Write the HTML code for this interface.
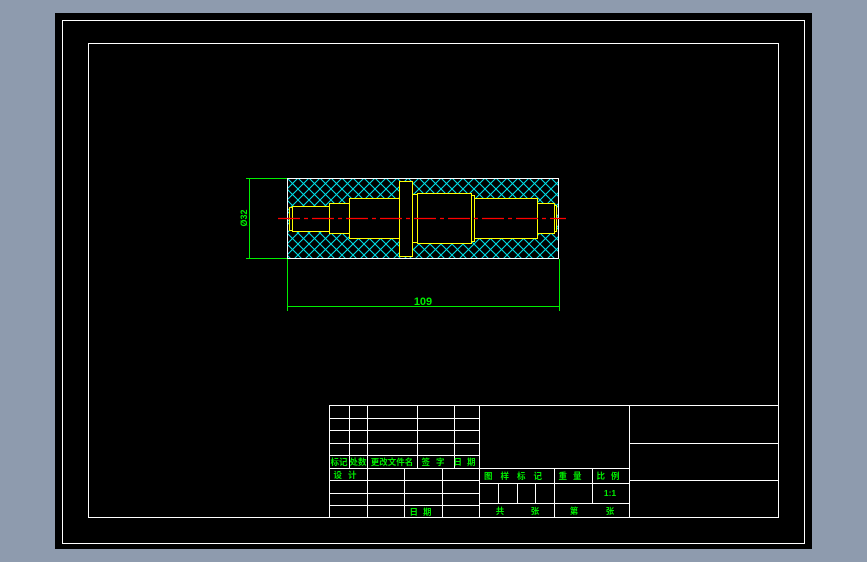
<!DOCTYPE html>
<html><head><style>html,body{margin:0;padding:0;background:#8e9bae;width:867px;height:562px;overflow:hidden}</style></head>
<body>
<svg width="867" height="562" viewBox="0 0 867 562" xmlns="http://www.w3.org/2000/svg" style="display:block">
<defs>
<pattern id="h" x="287" y="178" width="11" height="11" patternUnits="userSpaceOnUse">
<path d="M0 0L11 11M11 0L0 11" stroke="#00e5ee" stroke-width="1"/>
</pattern>
</defs>
<rect x="55" y="13" width="757" height="536" fill="#000"/>
<rect x="62.5" y="20.5" width="742" height="523" fill="none" stroke="#fff"/>
<rect x="88.5" y="43.5" width="690" height="474" fill="none" stroke="#fff"/>
<rect x="287.5" y="178.5" width="271" height="80" fill="url(#h)" stroke="#fff"/>
<g fill="#000" stroke="#ffff00" stroke-width="1">
<rect x="289.5" y="207.5" width="3" height="23"/>
<rect x="292.5" y="206.5" width="37" height="25"/>
<rect x="329.5" y="203.5" width="20" height="30"/>
<rect x="349.5" y="198.5" width="51" height="40"/>
<rect x="411.5" y="194.5" width="6" height="48"/>
<rect x="417.5" y="193.5" width="54" height="50"/>
<rect x="471.5" y="195.5" width="3" height="46"/>
<rect x="474.5" y="198.5" width="63" height="40"/>
<rect x="537.5" y="203.5" width="17" height="30"/>
<rect x="554.5" y="205.5" width="2" height="26"/>
<rect x="399.5" y="181.5" width="13" height="75"/>
</g>
<line x1="278" y1="218.5" x2="566" y2="218.5" stroke="#ff0000" stroke-width="1.2" stroke-dasharray="22,4,4,4"/>
<g stroke="#00ee00" stroke-width="1">
<line x1="246" y1="178.5" x2="287" y2="178.5"/>
<line x1="246" y1="258.5" x2="287" y2="258.5"/>
<line x1="249.5" y1="178" x2="249.5" y2="258"/>
<line x1="287.5" y1="259" x2="287.5" y2="311"/>
<line x1="559.5" y1="259" x2="559.5" y2="311"/>
<line x1="287" y1="306.5" x2="559" y2="306.5"/>
</g>
<g fill="#00ee00" font-family="Liberation Sans, sans-serif">
<text x="423" y="305" font-size="11" text-anchor="middle" font-weight="bold">109</text>
<text transform="translate(247,218) rotate(-90)" font-size="9" text-anchor="middle" font-weight="bold">Ø32</text>
</g>
<g stroke="#fff" stroke-width="1" fill="none">
<rect x="329.5" y="405.5" width="449" height="112"/>
<line x1="329" y1="418.5" x2="479" y2="418.5"/>
<line x1="329" y1="430.5" x2="479" y2="430.5"/>
<line x1="329" y1="443.5" x2="479" y2="443.5"/>
<line x1="329" y1="455.5" x2="479" y2="455.5"/>
<line x1="329" y1="468.5" x2="629" y2="468.5"/>
<line x1="329" y1="480.5" x2="479" y2="480.5"/>
<line x1="329" y1="493.5" x2="479" y2="493.5"/>
<line x1="329" y1="505.5" x2="479" y2="505.5"/>
<line x1="349.5" y1="405" x2="349.5" y2="468"/>
<line x1="367.5" y1="405" x2="367.5" y2="518"/>
<line x1="417.5" y1="405" x2="417.5" y2="468"/>
<line x1="454.5" y1="405" x2="454.5" y2="468"/>
<line x1="404.5" y1="468" x2="404.5" y2="518"/>
<line x1="442.5" y1="468" x2="442.5" y2="518"/>
<line x1="479.5" y1="405" x2="479.5" y2="518"/>
<line x1="629.5" y1="405" x2="629.5" y2="518"/>
<line x1="629" y1="443.5" x2="779" y2="443.5"/>
<line x1="629" y1="480.5" x2="779" y2="480.5"/>
<line x1="479" y1="483.5" x2="629" y2="483.5"/>
<line x1="479" y1="503.5" x2="629" y2="503.5"/>
<line x1="554.5" y1="468" x2="554.5" y2="518"/>
<line x1="592.5" y1="468" x2="592.5" y2="503"/>
<line x1="498.5" y1="483" x2="498.5" y2="503"/>
<line x1="517.5" y1="483" x2="517.5" y2="503"/>
<line x1="535.5" y1="483" x2="535.5" y2="503"/>
</g>
<g fill="#00ee00" font-family="Liberation Sans, 'Noto Sans CJK SC', sans-serif" font-size="8.5" font-weight="bold" text-anchor="middle">
<text x="339" y="465">标记</text>
<text x="358" y="465">处数</text>
<text x="392" y="465">更改文件名</text>
<text x="436" y="465" letter-spacing="6">签字</text>
<text x="467" y="465" letter-spacing="5">日期</text>
<text x="348" y="478" letter-spacing="6">设计</text>
<text x="423" y="515" letter-spacing="5">日期</text>
<text x="517" y="479" letter-spacing="8">图样标记</text>
<text x="573" y="479" letter-spacing="6">重量</text>
<text x="611" y="479" letter-spacing="6">比例</text>
<text x="610" y="496">1:1</text>
<text x="500" y="514">共</text>
<text x="535" y="514">张</text>
<text x="574" y="514">第</text>
<text x="610" y="514">张</text>
</g>
</svg>
</body></html>
